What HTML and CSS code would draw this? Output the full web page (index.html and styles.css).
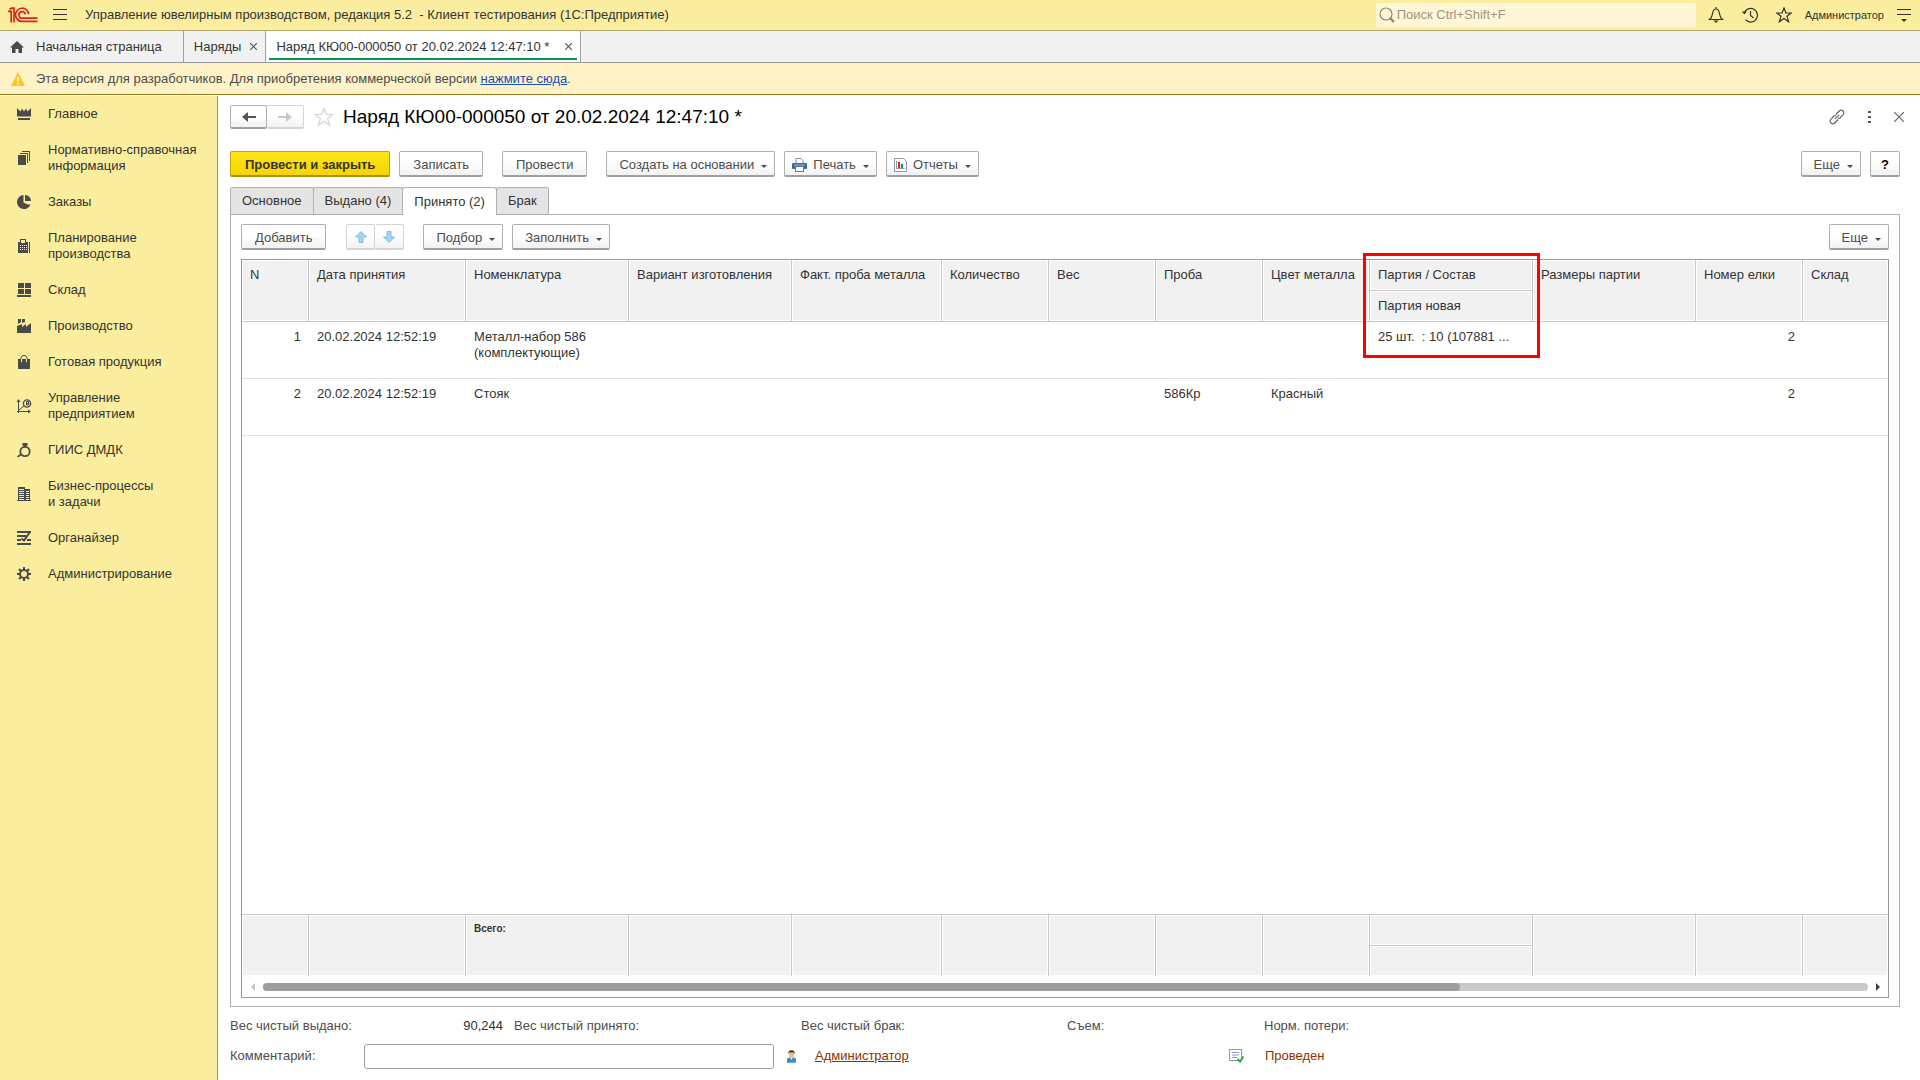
FILE: index.html
```html
<!DOCTYPE html>
<html lang="ru">
<head>
<meta charset="utf-8">
<title>Наряд КЮ00-000050 от 20.02.2024 12:47:10 *</title>
<link rel="stylesheet" href="styles.css">
</head>
<body>
<header class="topbar">
  <svg class="logo" width="30" height="16" viewBox="0 0 30 16" fill="none" stroke="#d9241c" stroke-width="1.700"><path d="M0 4.300h3.200V15.500M1.500 2.500 3.500 1.200H6V15.500"/><path d="M20.700 7.300A6.600 6.600 0 1 0 14.500 14.400H29.500"/><path d="M17.400 7.300A3.300 3.300 0 1 0 14.500 11.200H29.500"/></svg>
  <button class="icon-btn menu-btn" aria-label="Меню"><svg width="14" height="12" viewBox="0 0 14 12" fill="#333"><path d="M0 0h14v1H0ZM0 5h14v1H0ZM0 10h14v1H0Z"/></svg></button>
  <h1 class="app-title">Управление ювелирным производством, редакция 5.2 &nbsp;- Клиент тестирования (1С:Предприятие)</h1>
  <label class="search">
    <svg width="16" height="16" viewBox="0 0 16 16" fill="none" stroke="#8f8a70" stroke-width="1.200"><circle cx="7" cy="7" r="6"/><path d="m11 11 4 4" stroke-width="2.400"/></svg>
    <input type="text" placeholder="Поиск Ctrl+Shift+F" aria-label="Поиск">
  </label>
  <div class="top-actions">
    <button class="icon-btn" aria-label="Уведомления"><svg width="16" height="16" viewBox="0 0 16 16" fill="none" stroke="#333" stroke-width="1.200"><path d="M8 0v2M1.500 12.500h13C12 11 12 9 11.500 6.500 11 3.500 10 2 8 2S5 3.500 4.500 6.500C4 9 4 11 1.500 12.500Z"/><path d="M5.500 13.500h5L8 16Z" fill="#333" stroke="none"/></svg></button>
    <button class="icon-btn" aria-label="История"><svg width="16" height="16" viewBox="0 0 16 16" fill="none" stroke="#333" stroke-width="1.200"><path d="M2.200 6A6.800 6.800 0 1 1 3.500 12.700M8.500 4v4.500l3 2.500"/><path d="M0 4.500h5L2.300 7.500Z" fill="#333" stroke="none"/></svg></button>
    <button class="icon-btn" aria-label="Избранное"><svg width="16" height="16" viewBox="0 0 16 16" fill="none" stroke="#333" stroke-width="1.200"><path d="m8 1 1.900 5h5.300l-4.200 3.300 1.600 5.400L8 11.500l-4.600 3.200L5 9.300.8 6h5.300Z"/></svg></button>
    <a class="user" href="#">Администратор</a>
    <button class="icon-btn" aria-label="Настройки"><svg width="14" height="14" viewBox="0 0 14 14" fill="#333"><path d="M0 1h14v1H0ZM0 6h14v1H0ZM4 11h6l-3 3Z"/></svg></button>
  </div>
</header>

<nav class="window-tabs">
  <a class="wtab wtab-home" href="#"><svg width="14" height="12" viewBox="0 0 14 12" fill="#4a4a4a"><path d="M7 0 0 6.500h2V12h3.500V8h3v4H12V6.500h2Z"/></svg>Начальная страница</a>
  <a class="wtab" href="#">Наряды<svg width="7" height="7" viewBox="0 0 7 7" stroke="#555" stroke-width="1.200"><path d="m0 0 7 7M7 0 0 7"/></svg></a>
  <a class="wtab wtab-active" href="#">Наряд КЮ00-000050 от 20.02.2024 12:47:10 *<svg width="7" height="7" viewBox="0 0 7 7" stroke="#555" stroke-width="1.200"><path d="m0 0 7 7M7 0 0 7"/></svg></a>
</nav>

<div class="notice">
  <svg width="14" height="14" viewBox="0 0 14 14"><path d="M7 0 14 14H0Z" fill="#fcc520"/><path d="M7 5v4.500M7 11v1.500" stroke="#fff" stroke-width="1.600"/></svg>
  <span>Эта версия для разработчиков. Для приобретения коммерческой версии <a href="#">нажмите сюда</a>.</span>
</div>

<div class="workspace">
  <nav class="sidebar">
    <a href="#"><svg viewBox="0 0 14 14"><path d="M0 1l3.500 3.500L5 1.500 7 4.500 9 1.500l1.500 3L14 1v8.500H0ZM1 11h12v2H1Z"/></svg><span>Главное</span></a>
    <a href="#"><svg viewBox="0 0 14 14"><path d="M1 4h8v10H1ZM3 2h8v10h-1V3H3ZM5 0h8v10h-1V1H5Z"/></svg><span>Нормативно-справочная информация</span></a>
    <a href="#"><svg viewBox="0 0 14 14"><path d="M6.500 0V7.500l4 2H13.500A7 7 0 1 1 6.500 0Z"/><path d="M8 0a6 6 0 0 1 6 6H8Z"/></svg><span>Заказы</span></a>
    <a href="#"><svg viewBox="0 0 14 14"><path fill-rule="evenodd" d="M3 0h6v3h2v11H1V3h2ZM4 1v3h4V1ZM3 6v1h1V6Zm2 0v1h1V6Zm2 0v1h1V6Zm2 0v1h1V6ZM3 8v1h1V8Zm2 0v1h1V8Zm2 0v1h1V8Zm2 0v1h1V8ZM3 10v1h1v-1Zm2 0v1h1v-1Zm2 0v1h1v-1Zm2 0v1h1v-1ZM12 3h1v11h-1Z"/></svg><span>Планирование производства</span></a>
    <a href="#"><svg viewBox="0 0 14 14"><path d="M1 0h6v5H1ZM8 0h6v5H8ZM1 6h6v5H1ZM8 6h6v5H8ZM0 12h14v2H0Z"/></svg><span>Склад</span></a>
    <a href="#"><svg viewBox="0 0 14 14"><path d="M0 14V7l5-2v3l4-3v3l5-4v10ZM1 0h3v3L1 5ZM5 0h3v3L5 4Z"/></svg><span>Производство</span></a>
    <a href="#"><svg viewBox="0 0 14 14"><path d="M1 4h12v10H1Z"/><path d="M4 7V3a3 2.500 0 0 1 6 0v4" fill="none" stroke="#4a4a4a"/><path d="M4.500 7V4M9.500 7V4" stroke="#fbed9e"/></svg><span>Готовая продукция</span></a>
    <a href="#"><svg viewBox="0 0 14 14"><path d="M1.500 0 3.500 3h-4ZM14 12.500l-3 2v-4Z"/><path d="M1.500 1v13M0 12.500h13M2 11l5-4" fill="none" stroke="#4a4a4a"/><circle cx="10" cy="4.500" r="3.600" fill="none" stroke="#4a4a4a" stroke-width="1.400"/><path d="M9.500 2.500h2v3.500h-2zM9 4.300h3" fill="none" stroke="#4a4a4a"/></svg><span>Управление предприятием</span></a>
    <a href="#"><svg viewBox="0 0 14 14"><circle cx="8" cy="8.500" r="4.700" fill="none" stroke="#4a4a4a" stroke-width="1.800"/><path d="M5 1.500 6 0h4l1 1.500L8 5ZM4 10l1.500 1.500L1 14.500 0 13.500Z"/></svg><span>ГИИС ДМДК</span></a>
    <a href="#"><svg viewBox="0 0 14 14"><path fill-rule="evenodd" d="M1 0h7v2h5v11h1v1H0v-1h1ZM2 2v1h5V2Zm0 2v1h5V4Zm0 2v1h5V6Zm0 2v1h5V8Zm0 2v1h5v-1Zm0 2v1h5v-1ZM9 4v1h3V4Zm0 2v1h3V6Zm0 2v1h3V8Zm0 2v1h3v-1Zm0 2v1h3v-1Z"/></svg><span>Бизнес-процессы и&nbsp;задачи</span></a>
    <a href="#"><svg viewBox="0 0 14 14"><path d="M0 0h14v2H0ZM0 4h9v2H0ZM0 8h4v2H0ZM10 8h4v2h-4ZM0 12h14v2H0Z"/><path d="M13 1 7 9.500 4.500 7.500" fill="none" stroke="#4a4a4a" stroke-width="2"/></svg><span>Органайзер</span></a>
    <a href="#"><svg viewBox="0 0 14 14"><circle cx="7" cy="7" r="4" fill="none" stroke="#4a4a4a" stroke-width="2"/><path d="M7 0v3M7 11v3M0 7h3M11 7h3M2 2l2 2M10 10l2 2M2 12l2-2M10 4l2-2" stroke="#4a4a4a" stroke-width="2"/></svg><span>Администрирование</span></a>
  </nav>

  <main class="form">
    <div class="form-head">
      <div class="btn-group nav-group">
        <button class="btn" aria-label="Назад"><svg width="14" height="12" viewBox="0 0 14 12" fill="#555"><path d="M0 6 6 1v4h8v2H6v4Z"/></svg></button>
        <button class="btn btn-off" aria-label="Вперед" disabled><svg width="14" height="12" viewBox="0 0 14 12" fill="#c8c8c8"><path d="M14 6 8 1v4H0v2h8v4Z"/></svg></button>
      </div>
      <button class="icon-btn" aria-label="В избранное"><svg width="20" height="20" viewBox="0 0 20 20" fill="none" stroke="#d4d4d4" stroke-width="1.200"><path d="m10 1.500 2.300 6h6.500l-5.200 4.200 2 6.600-5.600-4-5.600 4 2-6.600L1.200 7.500h6.500Z"/></svg></button>
      <h2 class="form-title">Наряд КЮ00-000050 от 20.02.2024 12:47:10 *</h2>
      <div class="form-tools">
        <button class="icon-btn" aria-label="Ссылка"><svg width="16" height="16" viewBox="0 0 16 16" fill="none" stroke="#666" stroke-width="1.200"><path d="M6.800 5.500 10.200 2A2.600 2.600 0 0 1 14 5.800L11 9 8.800 9.500M9.200 10.500 5.800 14A2.600 2.600 0 0 1 2 10.200L5 7 7.200 6.500M5.800 10.200l4.400-4.400"/></svg></button>
        <button class="icon-btn" aria-label="Еще действия"><svg width="3" height="12" viewBox="0 0 3 12" fill="#555"><path d="M0 0h3v2H0ZM0 5h3v2H0ZM0 10h3v2H0Z"/></svg></button>
        <button class="icon-btn" aria-label="Закрыть"><svg width="10" height="10" viewBox="0 0 10 10" stroke="#666" stroke-width="1.200"><path d="m0 0 10 10M10 0 0 10"/></svg></button>
      </div>
    </div>

    <div class="commands">
      <button class="btn btn-main">Провести и закрыть</button>
      <button class="btn">Записать</button>
      <button class="btn gap-before">Провести</button>
      <button class="btn gap-before drop">Создать на основании</button>
      <button class="btn drop with-icon"><svg width="15" height="14" viewBox="0 0 15 14"><path d="M4 5V.5h5L11 2.500V5" fill="#fff" stroke="#7a8ea4"/><rect x="0" y="5" width="15" height="6" rx="1" fill="#3d6a94"/><path d="M2 7h11" stroke="#9cc0de"/><rect x="3.500" y="8.500" width="8" height="5" fill="#fff" stroke="#5d7c9a"/></svg>Печать</button>
      <button class="btn drop with-icon"><svg width="13" height="14" viewBox="0 0 13 14"><path d="M.5.5h9l3 3v10H.5Z" fill="#fff" stroke="#8797a8"/><path d="M2.500 3v7.500h8" fill="none" stroke="#8797a8"/><path d="M4 4h2v6H4Z" fill="#e02020"/><path d="M7 6h2v4H7Z" fill="#1f9a2e"/></svg>Отчеты</button>
      <button class="btn drop push">Еще</button>
      <button class="btn help">?</button>
    </div>

    <div class="page-tabs" role="tablist">
      <button role="tab">Основное</button>
      <button role="tab">Выдано (4)</button>
      <button role="tab" aria-selected="true">Принято (2)</button>
      <button role="tab">Брак</button>
    </div>

    <section class="panel">
      <div class="table-tools">
        <button class="btn">Добавить</button>
        <div class="btn-group move-group">
          <button class="btn btn-off" aria-label="Вверх"><svg width="12" height="12" viewBox="0 0 12 12"><path d="M6 .5 11.500 6H8v5.500H4V6H.5Z" fill="#a0d6f5" stroke="#86bcdc"/></svg></button>
          <button class="btn btn-off" aria-label="Вниз"><svg width="12" height="12" viewBox="0 0 12 12"><path d="M6 11.500.5 6H4V.5h4V6h3.500Z" fill="#a0d6f5" stroke="#86bcdc"/></svg></button>
        </div>
        <button class="btn drop">Подбор</button>
        <button class="btn drop">Заполнить</button>
        <button class="btn drop push">Еще</button>
      </div>

      <div class="grid">
        <table>
          <colgroup><col class="c-n"><col class="c-date"><col class="c-wide"><col class="c-wide"><col class="c-fact"><col class="c-std"><col class="c-std"><col class="c-std"><col class="c-std"><col class="c-wide"><col class="c-wide"><col class="c-std"><col></colgroup>
          <thead>
            <tr><th rowspan="2">N</th><th rowspan="2">Дата принятия</th><th rowspan="2">Номенклатура</th><th rowspan="2">Вариант изготовления</th><th rowspan="2">Факт. проба металла</th><th rowspan="2">Количество</th><th rowspan="2">Вес</th><th rowspan="2">Проба</th><th rowspan="2">Цвет металла</th><th class="marked">Партия / Состав<span class="marker"></span></th><th rowspan="2">Размеры партии</th><th rowspan="2">Номер елки</th><th rowspan="2">Склад</th></tr>
            <tr><th>Партия новая</th></tr>
          </thead>
          <tbody>
            <tr><td class="num">1</td><td>20.02.2024 12:52:19</td><td>Металл-набор 586 (комплектующие)</td><td></td><td></td><td></td><td></td><td></td><td></td><td>25 шт. &nbsp;: 10 (107881 ...</td><td></td><td class="num">2</td><td></td></tr>
            <tr><td class="num">2</td><td>20.02.2024 12:52:19</td><td>Стояк</td><td></td><td></td><td></td><td></td><td>586Кр</td><td>Красный</td><td></td><td></td><td class="num">2</td><td></td></tr>
            <tr class="filler"><td colspan="13"></td></tr>
          </tbody>
          <tfoot>
            <tr><td rowspan="2"></td><td rowspan="2"></td><td rowspan="2">Всего:</td><td rowspan="2"></td><td rowspan="2"></td><td rowspan="2"></td><td rowspan="2"></td><td rowspan="2"></td><td rowspan="2"></td><td></td><td rowspan="2"></td><td rowspan="2"></td><td rowspan="2"></td></tr>
            <tr><td></td></tr>
          </tfoot>
        </table>
        <div class="scroll">
          <svg width="4" height="8" viewBox="0 0 4 8" fill="#c4c4c4"><path d="M4 0v8L0 4Z"/></svg>
          <div class="track"><div class="thumb"></div></div>
          <svg width="4" height="8" viewBox="0 0 4 8" fill="#404040"><path d="M0 0v8l4-4Z"/></svg>
        </div>
      </div>
    </section>

    <div class="totals">
      <span>Вес чистый выдано:</span><output>90,244</output><span>Вес чистый принято:</span><span>Вес чистый брак:</span><span>Съем:</span><span>Норм. потери:</span>
    </div>
    <div class="bottom">
      <label for="comment">Комментарий:</label>
      <input id="comment" type="text">
      <svg width="9" height="13" viewBox="0 0 10 14"><path d="M0 14V10.500Q0 8 3 8h4q3 0 3 2.500V14Z" fill="#3a8fc8"/><path d="m3.500 8 1.500 3 1.500-3Z" fill="#fff"/><ellipse cx="5" cy="4.500" rx="3" ry="3.800" fill="#f0c080"/><path d="M1.500 4.500Q1 0 5 0t3.500 4.500L7.500 2.500h-5Z" fill="#4a3520"/></svg>
      <a href="#">Администратор</a>
      <svg width="15" height="14" viewBox="0 0 15 14"><rect x=".5" y=".5" width="12" height="11" fill="#fff" stroke="#8a98b4"/><path d="M3 3.500h7M3 6h7M3 8.500h5" stroke="#8a98b4"/><path d="m8.500 10 2.500 2.500 3.500-5" fill="none" stroke="#23b03c" stroke-width="2"/></svg>
      <span class="status">Проведен</span>
    </div>
  </main>
</div>
</body>
</html>
```
FILE: styles.css
```css
* { box-sizing: border-box; }
body {
  margin: 0;
  min-height: 100vh;
  display: flex;
  flex-direction: column;
  background: #fff;
  color: #333;
  font: 13px/16px "Liberation Sans", Arial, sans-serif;
}
svg { display: block; flex: none; }
button, input { font: inherit; color: inherit; }
h1, h2 { margin: 0; font-weight: normal; }
.icon-btn { display: flex; padding: 0; border: 0; background: none; }

.topbar {
  display: flex;
  align-items: center;
  height: 31px;
  padding: 0 9px 0 8px;
  background: #fbed9e;
  border-bottom: 1px solid #b0a870;
}
.menu-btn { margin: 0 18px 0 15px; }
.app-title { font-size: 13px; white-space: nowrap; }
.search {
  display: flex;
  align-items: center;
  gap: 2px;
  width: 320px;
  height: 24px;
  margin-left: auto;
  padding-left: 3px;
  background: #fdf7d8;
  border-radius: 2px;
}
.search input { flex: 1; min-width: 0; padding: 0; border: 0; outline: 0; background: none; }
.search input::placeholder { color: #9c9880; opacity: 1; }
.top-actions { display: flex; align-items: center; gap: 18px; margin-left: 12px; }
.user { margin: 0 -5px; color: #333; font-size: 11px; text-decoration: none; }

.window-tabs { display: flex; height: 32px; background: #f1f1f1; border-bottom: 1px solid #999; }
.wtab {
  display: flex;
  align-items: center;
  gap: 9px;
  padding: 0 8px 0 10px;
  border-right: 1px solid #a0a0a0;
  color: #333;
  text-decoration: none;
  white-space: nowrap;
}
.wtab-home { gap: 12px; padding: 0 21px 0 10px; }
.wtab-active {
  gap: 16px;
  background: linear-gradient(#009a4e, #009a4e) center bottom 2px / calc(100% - 6px) 2px no-repeat #fff;
}

.notice {
  display: flex;
  align-items: center;
  gap: 11px;
  height: 32px;
  padding-left: 11px;
  background: #fef2c6;
  border-bottom: 1px solid #9a7a1c;
  color: #4d4d4d;
}
.notice a { color: #1a4fb4; }

.workspace { display: flex; flex: 1; padding-top: 1px; }
.sidebar { flex: none; width: 218px; background: #fbed9e; border-right: 1px solid #a09858; }
.sidebar a {
  display: flex;
  align-items: center;
  gap: 17px;
  padding: 10px 8px 10px 17px;
  color: #333;
  text-decoration: none;
}
.sidebar svg { width: 14px; height: 14px; overflow: visible; fill: #4a4a4a; }

.form { display: flex; flex: 1; flex-direction: column; min-width: 0; padding: 9px 20px 11px 12px; }
.btn {
  display: flex;
  align-items: center;
  justify-content: center;
  height: 26px;
  padding: 2px 13px 0;
  border: 1px solid #b0b0b0;
  border-bottom: 2px solid #a0a0a0;
  border-radius: 2px;
  background: linear-gradient(#fff 40%, #f2f2f2);
  color: #4d4d4d;
  white-space: nowrap;
}
.btn-group { display: flex; }
.btn-group .btn { padding: 0; }
.btn-group .btn + .btn { border-left: 0; }
.btn-off { border-color: #d4d4d4; }
.drop { padding: 2px 7px 0 12px; }
.drop::after {
  content: "";
  margin: 3px 0 0 7px;
  border: 3px solid transparent;
  border-top-color: #4d4d4d;
  border-bottom: 0;
}
.push { margin-left: auto; }

.form-head { display: flex; align-items: center; height: 24px; gap: 9px; }
.nav-group { margin-right: 1px; }
.nav-group .btn { width: 37px; height: 24px; }
.form-title { color: #000; font-size: 19px; line-height: 24px; }
.form-tools { display: flex; align-items: center; gap: 23px; margin: 0 -4px 0 auto; }

.commands { display: flex; gap: 9px; margin-top: 22px; }
.btn-main { padding: 2px 14px 0; border-color: #bfa400; border-bottom-color: #a89000; background: linear-gradient(#ffe61a, #f5d400); color: #333; font-weight: bold; }
.gap-before { margin-left: 10px; }
.with-icon { padding-left: 7px; }
.with-icon svg { margin-right: 6px; }
.help { width: 30px; padding: 2px 0 0; color: #000; font-weight: bold; }

.page-tabs { display: flex; margin-top: 10px; padding-left: 1px; }
.page-tabs button {
  height: 27px;
  margin-left: -1px;
  padding: 0 11px;
  border: 1px solid #b0b0b0;
  border-bottom: 0;
  border-radius: 3px 3px 0 0;
  background: #e4e4e4;
}
.page-tabs button[aria-selected="true"] { position: relative; height: 28px; margin-bottom: -1px; background: #fff; }

.panel { display: flex; flex: 1; flex-direction: column; padding: 9px 10px 8px; border: 1px solid #b0b0b0; }
.table-tools { display: flex; gap: 9px; }
.move-group { margin: 0 10px 0 11px; }
.move-group .btn { width: 29px; }

.grid { display: flex; flex: 1; flex-direction: column; margin-top: 9px; border: 1px solid #999; }
table { flex: 1; width: 100%; table-layout: fixed; border-collapse: separate; border-spacing: 0; }
.c-n { width: 67px; }
.c-date { width: 157px; }
.c-wide { width: 163px; }
.c-fact { width: 150px; }
.c-std { width: 107px; }
th, td { padding: 7px 8px; text-align: left; vertical-align: top; font-weight: normal; }
th, tfoot td {
  height: 31px;
  border-right: 1px solid #c8c8c8;
  background: #f1f1f1;
  box-shadow: inset 0 0 0 1px #fff;
  white-space: nowrap;
}
th { border-bottom: 1px solid #c8c8c8; }
tfoot td { padding: 6px 8px; border-top: 1px solid #c8c8c8; font-size: 10px; font-weight: bold; }
tr > :last-child:not(:only-child) { border-right: 0; }
tbody td { height: 57px; border-bottom: 1px solid #e2e2e2; }
tbody .filler td { height: auto; padding: 0; border: 0; }
.num { text-align: right; }
.marked { position: relative; }
.marker { position: absolute; top: -7px; left: -7px; width: 177px; height: 105px; border: 3px solid #f00; }

.scroll { display: flex; align-items: center; gap: 8px; height: 21px; padding: 0 8px 0 9px; }
.track { flex: 1; height: 8px; border-radius: 4px; background: #cacaca; }
.thumb { width: 74.6%; height: 8px; border-radius: 4px; background: #9e9e9e; }

.totals, .bottom { display: grid; align-items: center; color: #4d4d4d; white-space: nowrap; }
.totals { grid-template-columns: 174px 110px 287px 266px 197px auto; height: 36px; padding-top: 2px; }
.totals output { padding-right: 11px; color: #333; text-align: right; }
.bottom { grid-template-columns: 134px 410px 41px 414px 36px auto; height: 26px; }
.bottom input { height: 25px; padding: 0 6px; border: 1px solid #a0a0a0; border-radius: 3px; background: #fff; }
.bottom svg { margin-left: 13px; }
.bottom a, .status { color: #8c3200; }
.bottom a + svg { margin-left: 0; }
```
